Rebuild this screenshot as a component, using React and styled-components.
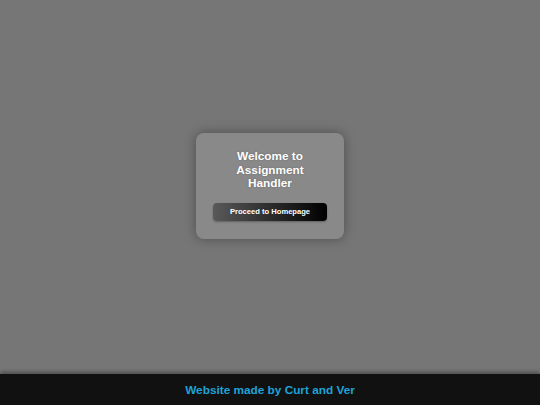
import React from "react";
import styled, { createGlobalStyle } from "styled-components";

const Global = createGlobalStyle`
  html, body { margin: 0; padding: 0; height: 100%; }
  body { background: #767676; font-family: "Liberation Sans", Arial, sans-serif; }
  #root { min-height: 100vh; display: flex; flex-direction: column; }
`;

const Main = styled.main`
  flex: 1;
  display: flex;
  align-items: center;
  justify-content: center;
`;

const Card = styled.div`
  width: 148px;
  box-sizing: border-box;
  padding: 17px 17px 18px;
  background: #898989;
  border-radius: 8px;
  box-shadow: 0 0 12px rgba(0, 0, 0, 0.35);
  display: flex;
  flex-direction: column;
  align-items: center;
  gap: 12px;
  margin-top: -2px;
`;

const Title = styled.h1`
  margin: 0;
  color: #fff;
  font-size: 11.8px;
  line-height: 13.5px;
  font-weight: bold;
  text-align: center;
  text-shadow: 0 0 2px rgba(0, 0, 0, 0.25);
`;

const Button = styled.button`
  width: 114px;
  height: 18px;
  border: none;
  border-radius: 4px;
  background: linear-gradient(to right, #595959, #000);
  color: #fff;
  font-family: "Liberation Sans", Arial, sans-serif;
  font-weight: bold;
  font-size: 7.6px;
  padding: 0;
  cursor: pointer;
  box-shadow: 0 1px 2px rgba(0, 0, 0, 0.3);
`;

const Footer = styled.footer`
  height: 31px;
  background: #111;
  display: flex;
  align-items: center;
  justify-content: center;
  box-shadow: 0 -2px 4px rgba(0, 0, 0, 0.35);
`;

const FooterText = styled.p`
  margin: 0;
  color: #1ea3d8;
  font-size: 11.8px;
  font-weight: bold;
`;

export default function App() {
  return (
    <>
      <Global />
      <Main>
        <Card>
          <Title>
            Welcome to
            <br />
            Assignment
            <br />
            Handler
          </Title>
          <Button>Proceed to Homepage</Button>
        </Card>
      </Main>
      <Footer>
        <FooterText>Website made by Curt and Ver</FooterText>
      </Footer>
    </>
  );
}
